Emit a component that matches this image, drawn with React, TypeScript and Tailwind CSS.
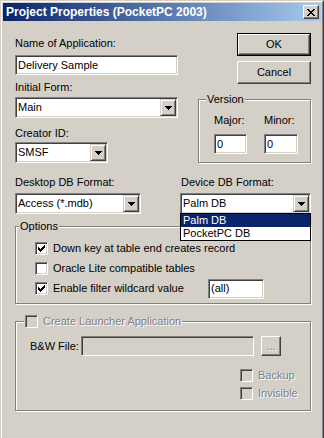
import React from 'react';

const FACE = 'bg-[#d4d0c8]';
const SUNKEN =
  'border border-t-[#808080] border-l-[#808080] border-r-white border-b-white shadow-[inset_1px_1px_0_#404040,inset_-1px_-1px_0_#d4d0c8]';
const RAISED =
  'border border-t-white border-l-white border-r-[#404040] border-b-[#404040] shadow-[inset_-1px_-1px_0_#808080]';
const ARROW_RAISED =
  'border border-t-[#d4d0c8] border-l-[#d4d0c8] border-r-[#404040] border-b-[#404040] shadow-[inset_1px_1px_0_#ffffff,inset_-1px_-1px_0_#808080]';
const DISABLED_TEXT = 'text-[#808080] [text-shadow:1px_1px_0_#ffffff]';

const CHECK_PATH =
  'M6 0h1v1h-1z M5 1h2v1h-2z M0 2h1v1h-1z M4 2h3v1h-3z M0 3h2v1h-2z M3 3h3v1h-3z M0 4h5v1h-5z M1 5h3v1h-3z M2 6h1v1h-1z';
const ARROW_PATH = 'M0 0h7v1h-7z M1 1h5v1h-5z M2 2h3v1h-3z M3 3h1v1h-1z';
const CLOSE_PATH =
  'M0 0h2v1h-2z M6 0h2v1h-2z M1 1h2v1h-2z M5 1h2v1h-2z M2 2h4v1h-4z M3 3h2v1h-2z M2 4h4v1h-4z M1 5h2v1h-2z M5 5h2v1h-2z M0 6h2v1h-2z M6 6h2v1h-2z';

type TextBoxProps = {
  value?: string;
  className?: string;
  disabled?: boolean;
};

const TextBox = ({ value = '', className = '', disabled }: TextBoxProps) => (
  <div
    className={`${SUNKEN} h-[20px] flex items-center pl-[2px] whitespace-nowrap ${
      disabled ? FACE : 'bg-white'
    } ${className}`}
  >
    {value}
  </div>
);

const Combo = ({ value, className = '' }: { value: string; className?: string }) => (
  <div className={`${SUNKEN} h-[21px] bg-white flex p-[1px] ${className}`}>
    <span className="flex-1 flex items-center pl-[1px] whitespace-nowrap">{value}</span>
    <div className={`${ARROW_RAISED} w-[16px] h-full ${FACE} flex items-center justify-center`}>
      <svg width="7" height="4" viewBox="0 0 7 4" shapeRendering="crispEdges">
        <path d={ARROW_PATH} fill="#000" />
      </svg>
    </div>
  </div>
);

const Checkbox = ({ checked, disabled }: { checked?: boolean; disabled?: boolean }) => (
  <div
    className={`${SUNKEN} w-[13px] h-[13px] shrink-0 flex items-center justify-center ${
      disabled ? FACE : 'bg-white'
    }`}
  >
    {checked && (
      <svg width="7" height="7" viewBox="0 0 7 7" shapeRendering="crispEdges">
        <path d={CHECK_PATH} fill="#000" />
      </svg>
    )}
  </div>
);

const CheckRow = ({
  label,
  checked,
  disabled,
}: {
  label: string;
  checked?: boolean;
  disabled?: boolean;
}) => (
  <div className="h-[13px] flex items-center gap-[5px]">
    <Checkbox checked={checked} disabled={disabled} />
    <span className={`whitespace-nowrap ${disabled ? DISABLED_TEXT : ''}`}>{label}</span>
  </div>
);

type GroupProps = {
  legend: React.ReactNode;
  legendLeft: string;
  className?: string;
  children?: React.ReactNode;
};

const Group = ({ legend, legendLeft, className = '', children }: GroupProps) => (
  <div
    className={`relative border border-[#808080] shadow-[inset_1px_1px_0_#ffffff,1px_1px_0_#ffffff] ${className}`}
  >
    <div className={`absolute -top-[7px] ${legendLeft} ${FACE} px-[1px] h-[13px] flex items-center`}>
      {legend}
    </div>
    {children}
  </div>
);

const PushButton = ({ label, isDefault }: { label: string; isDefault?: boolean }) =>
  isDefault ? (
    <div className="w-[74px] h-[23px] border border-black">
      <div className={`${RAISED} w-full h-full flex items-center justify-center`}>{label}</div>
    </div>
  ) : (
    <div className={`${RAISED} w-[74px] h-[23px] flex items-center justify-center`}>{label}</div>
  );

const TitleBar = () => (
  <div className="h-[18px] flex items-center pl-[3px] pr-[2px] bg-[linear-gradient(to_right,#0a246a,#a6caf0)]">
    <span className="flex-1 text-white font-bold text-[12px] whitespace-nowrap">
      Project Properties (PocketPC 2003)
    </span>
    <div className={`${RAISED} ${FACE} w-[16px] h-[14px] flex items-center justify-center`}>
      <svg width="8" height="7" viewBox="0 0 8 7" shapeRendering="crispEdges">
        <path d={CLOSE_PATH} fill="#000" />
      </svg>
    </div>
  </div>
);

const Label = ({ children, className = '' }: { children: React.ReactNode; className?: string }) => (
  <div className={`h-[13px] whitespace-nowrap ${className}`}>{children}</div>
);

export default function App() {
  return (
    <div className="w-[324px] h-[438px] overflow-hidden bg-[#d4d0c8] [font-family:'Liberation_Sans',Arial,sans-serif] text-[11px] leading-[13px] text-black border-l border-t border-r border-l-[#d4d0c8] border-t-[#d4d0c8] border-r-[#404040]">
      <div className="h-full border-l border-t border-r border-l-white border-t-white border-r-[#808080] p-[1px]">
        <TitleBar />

        <div className="pl-[12px] pr-[10px] pt-[12px]">
          <div className="flex justify-between">
            <div className="w-[163px] pt-[4px] flex flex-col">
              <Label>Name of Application:</Label>
              <TextBox value="Delivery Sample" className="mt-[5px] w-full" />
              <Label className="mt-[6px]">Initial Form:</Label>
              <Combo value="Main" className="mt-[3px] w-full" />
              <Label className="mt-[9px]">Creator ID:</Label>
              <Combo value="SMSF" className="mt-[2px] w-[93px]" />
            </div>

            <div className="w-[113px] flex flex-col">
              <div className="self-end">
                <PushButton label="OK" isDefault />
              </div>
              <div className="self-end mt-[5px]">
                <PushButton label="Cancel" />
              </div>
              <Group
                legend="Version"
                legendLeft="left-[7px]"
                className="mt-[15px] h-[64px] pt-[14px] pl-[15px]"
              >
                <div className="flex gap-[17px]">
                  <div className="flex flex-col">
                    <Label>Major:</Label>
                    <TextBox value="0" className="mt-[7px] w-[33px]" />
                  </div>
                  <div className="flex flex-col">
                    <Label>Minor:</Label>
                    <TextBox value="0" className="mt-[7px] w-[34px]" />
                  </div>
                </div>
              </Group>
            </div>
          </div>

          <div className="mt-[13px] flex">
            <div className="w-[165px] flex flex-col">
              <Label>Desktop DB Format:</Label>
              <Combo value="Access (*.mdb)" className="mt-[4px] w-[126px]" />
            </div>
            <div className="flex-1 flex flex-col">
              <Label className="pl-[1px]">Device DB Format:</Label>
              <div className="relative mt-[4px] z-10">
                <Combo value="Palm DB" className="w-full" />
                <div className="absolute left-0 right-0 top-[20px] border border-black bg-white">
                  <div className="h-[13px] pl-[2px] flex items-center bg-[#0a246a] text-white">Palm DB</div>
                  <div className="h-[13px] pl-[2px] flex items-center">PocketPC DB</div>
                </div>
              </div>
            </div>
          </div>

          <Group
            legend="Options"
            legendLeft="left-[3px]"
            className="mt-[12px] pt-[15px] pb-[8px] pl-[19px] flex flex-col gap-[7px]"
          >
            <CheckRow label="Down key at table end creates record" checked />
            <CheckRow label="Oracle Lite compatible tables" />
            <div className="h-[13px] flex items-center">
              <div className="w-[173px] flex items-center gap-[5px]">
                <Checkbox checked />
                <span className="whitespace-nowrap">Enable filter wildcard value</span>
              </div>
              <TextBox value="(all)" className="w-[56px]" />
            </div>
          </Group>

          <Group
            legend={<CheckRow label="Create Launcher Application" disabled />}
            legendLeft="left-[8px]"
            className="mt-[17px] pt-[14px] pb-[10px] pl-[14px]"
          >
            <div className="flex items-center h-[20px]">
              <span className={`w-[51px] whitespace-nowrap`}>B&amp;W File:</span>
              <TextBox disabled className="w-[173px]" />
              <div
                className={`${RAISED} ml-[7px] w-[20px] h-[20px] flex items-center justify-center ${DISABLED_TEXT}`}
              >
                ...
              </div>
            </div>
            <div className="ml-[210px] mt-[13px] flex flex-col gap-[5px]">
              <CheckRow label="Backup" disabled />
              <CheckRow label="Invisible" disabled />
            </div>
          </Group>
        </div>
      </div>
    </div>
  );
}
